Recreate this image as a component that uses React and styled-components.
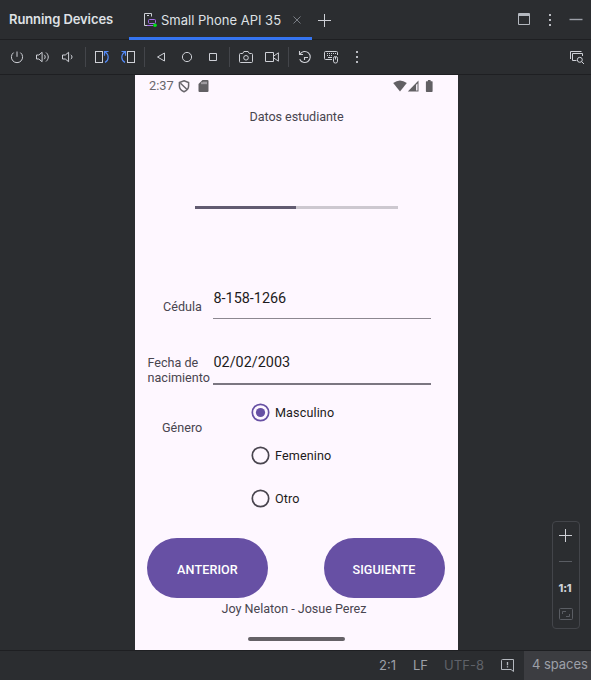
import React from "react";
import styled, { createGlobalStyle } from "styled-components";

const Global = createGlobalStyle`
  * { box-sizing: border-box; }
  body { margin: 0; background: #2b2d30; overflow: hidden; }
  svg { display: block; flex: none; }
`;

const Window = styled.div`
  width: 591px;
  height: 680px;
  display: flex;
  flex-direction: column;
  background: #2b2d30;
  color: #dfe1e5;
  font-family: Inter, sans-serif;
  font-size: 13px;
`;

const TabBar = styled.header`
  height: 40px;
  display: flex;
  align-items: stretch;
  border-bottom: 1px solid #1e1f22;
  flex: none;
`;

const ToolTitle = styled.div`
  width: 129px;
  padding-left: 9px;
  line-height: 39px;
  font-weight: 600;
  font-size: 13px;
  letter-spacing: -0.09px;
  white-space: nowrap;
`;

const Tab = styled.div`
  width: 183px;
  height: 40px;
  padding: 0 7px 0 14px;
  display: flex;
  align-items: center;
  background: linear-gradient(#3574f0, #3574f0) left bottom / 100% 3px no-repeat;
`;

const TabLabel = styled.span`
  width: 130px;
  margin-left: 4px;
  white-space: nowrap;
  letter-spacing: 0;
`;

const TabActions = styled.div`
  display: flex;
  align-items: center;
  padding-left: 4px;
  flex: 1;
`;

const WindowActions = styled.div`
  display: flex;
  margin-left: auto;
  padding-right: 2px;
`;

const Toolbar = styled.div`
  height: 35px;
  padding: 0 1px 0 4px;
  display: flex;
  align-items: center;
  border-bottom: 1px solid #1e1f22;
  flex: none;
`;

const Slot = styled.div`
  width: 26px;
  display: flex;
  justify-content: center;
  margin-left: ${(p) => (p.$end ? "auto" : 0)};
`;

const Separator = styled.div`
  width: 1px;
  height: 20px;
  margin: 0 3px;
  background: #43454a;
`;

const Stage = styled.main`
  height: 575px;
  padding-left: 135px;
  display: flex;
  flex: none;
`;

const Phone = styled.section`
  width: 323px;
  height: 575px;
  display: flex;
  flex-direction: column;
  background: #fef7ff;
  color: #49454f;
  font-family: Roboto, sans-serif;
  font-size: 13px;
`;

const PhoneStatus = styled.div`
  height: 22px;
  padding: 0 24px 0 14px;
  display: flex;
  align-items: center;
  color: #69666c;
`;

const Clock = styled.span`
  width: 28px;
  margin-top: -1px;
  font-size: 12.8px;
`;

const SignalGroup = styled.div`
  display: flex;
  align-items: center;
  margin-left: auto;
`;

const Heading = styled.div`
  margin-top: 12px;
  height: 16px;
  line-height: 16px;
  text-align: center;
  font-size: 12.6px;
  letter-spacing: -0.05px;
`;

const Progress = styled.div`
  width: 202.5px;
  height: 3px;
  margin: 81px 0 0 60px;
  background: #cdc8d0;
`;

const ProgressFill = styled.div`
  width: 101px;
  height: 3px;
  background: #625b71;
`;

const FieldRow = styled.div`
  height: 39px;
  margin-top: ${(p) => p.$top}px;
  display: grid;
  grid-template-columns: 78px 218px;
`;

const FieldLabel = styled.label`
  padding-left: ${(p) => p.$left}px;
  padding-top: ${(p) => p.$top || 0}px;
  font-size: 12.6px;
  line-height: 15px;
  letter-spacing: 0;
  white-space: pre;
`;

const FieldValue = styled.div`
  height: ${(p) => (p.$strong ? 35 : 34)}px;
  padding: ${(p) => (p.$strong ? 1 : 2)}px 0 0 0.5px;
  border-bottom: ${(p) => (p.$strong ? "2px solid #7b7681" : "1px solid #8c8790")};
  color: #1d1b20;
  font-size: 14.4px;
  line-height: 24px;
  letter-spacing: 0;
`;

const GenderRow = styled.div`
  margin-top: 2px;
  height: 130px;
  display: grid;
  grid-template-columns: 116px 1fr;
`;

const Option = styled.div`
  height: 43.2px;
  display: flex;
  align-items: center;
  gap: 5px;
  color: #1d1b20;
  font-size: 12.6px;
  letter-spacing: 0.12px;
`;

const ButtonRow = styled.div`
  margin-top: 17px;
  padding: 0 13.5px 0 12px;
  display: flex;
  justify-content: space-between;
`;

const PillButton = styled.button`
  width: 121px;
  height: 60px;
  padding: 2px 0 0;
  border: 0;
  border-radius: 30px;
  background: #6750a4;
  color: #fff;
  font: 500 12.6px Roboto, sans-serif;
  letter-spacing: 0.1px;
`;

const Credits = styled.div`
  margin-top: 3px;
  padding-right: 5px;
  height: 16px;
  line-height: 16px;
  text-align: center;
  font-size: 12.6px;
  letter-spacing: -0.03px;
`;

const HomeHandle = styled.div`
  width: 97px;
  height: 4px;
  margin: 20px 0 0 113px;
  border-radius: 2px;
  background: #656167;
`;

const ZoomPanel = styled.aside`
  width: 28px;
  height: 108px;
  margin: 446px 11px 0 auto;
  display: flex;
  flex-direction: column;
  align-items: center;
  border: 1px solid #43454a;
  border-radius: 4px;
`;

const ZoomCell = styled.div`
  height: 26.2px;
  padding-top: ${(p) => p.$drop || 0}px;
  padding-right: 2px;
  display: flex;
  align-items: center;
  justify-content: center;
  font-size: 11px;
  font-weight: 800;
  letter-spacing: -0.2px;
  color: #ced0d6;
`;

const Footer = styled.footer`
  height: 30px;
  display: flex;
  align-items: center;
  border-top: 1px solid #1e1f22;
  color: #9da0a8;
  flex: none;
`;

const FooterItem = styled.span`
  width: ${(p) => p.$w}px;
  margin-top: -2px;
  color: ${(p) => (p.$dim ? "#5f6269" : "inherit")};
  letter-spacing: ${(p) => p.$ls || 0}px;
  white-space: nowrap;
  &:first-child { margin-left: 379px; }
`;

const Indent = styled.div`
  width: 67px;
  height: 29px;
  padding-left: 8px;
  line-height: 27px;
  background: #3c3d41;
  white-space: nowrap;
  letter-spacing: -0.05px;
`;

const Icon = ({ w = 16, h = 16, color = "#ced0d6", children, ...rest }) => (
  <svg width={w} height={h} viewBox={`0 0 ${w} ${h}`} fill="none" stroke={color} {...rest}>
    {children}
  </svg>
);

const DeviceTabIcon = () => (
  <Icon w={14}>
    <path d="M4.5 13.5h-3v-12h7v3M4 3.5h2" />
    <rect x="5.5" y="7.5" width="7" height="4" rx="1" stroke="#a571e6" />
    <path d="M4 13.5h6" stroke="#a571e6" />
    <circle cx="12" cy="13.2" r="1.8" fill="#00e31a" stroke="none" />
  </Icon>
);

const Speaker = ({ loud }) => (
  <Icon>
    {loud ? (
      <path d="M1.5 6h2.3l3.3-2.7v9.4L3.8 10H1.5zM9.2 5.8c1.3 1.2 1.3 3.2 0 4.4M11 3.5c3 2.5 3 6.5 0 9" />
    ) : (
      <path d="M1.5 6h2.8l3.3-2.7v9.4L4.3 10H1.5zM9.8 5.8c1.6 1.2 1.6 3.2 0 4.4" />
    )}
  </Icon>
);

const Rotate = ({ right }) => (
  <Icon>
    <g transform={right ? "translate(16 0) scale(-1 1)" : undefined}>
      <rect x="1.5" y="2.5" width="7" height="11" />
      <path d="M11 13.4c4-1.8 4.4-7.6.2-10.4M10.5 6.8V2.5h4" stroke="#548af7" strokeWidth="1.2" />
    </g>
  </Icon>
);

const Dots = () => (
  <Icon stroke="none">
    <path d="M7 2h2v2H7zM7 7h2v2H7zM7 12h2v2H7z" fill="#b9bbc1" />
  </Icon>
);

const Radio = ({ on }) => (
  <Icon w={19} h={19} color={on ? "#6750a4" : "#49454f"}>
    <circle cx="9.5" cy="9.5" r="8.2" strokeWidth="1.7" />
    {on && <circle cx="9.5" cy="9.5" r="4.6" fill="#6750a4" stroke="none" />}
  </Icon>
);

export default function App() {
  return (
    <Window>
      <Global />
      <TabBar>
        <ToolTitle>Running Devices</ToolTitle>
        <Tab>
          <DeviceTabIcon />
          <TabLabel>Small Phone API 35</TabLabel>
          <Icon color="#7a7e85"><path d="M4.5 4.5l7 7M11.5 4.5l-7 7" /></Icon>
        </Tab>
        <TabActions>
          <Icon><path d="M8.5 2v13M2 8.5h13" /></Icon>
          <WindowActions>
            <Slot><Icon color="#b4b8bf"><path d="M2.5 1.5h11v11h-11zM2 2.5h12M2 3.5h12" /></Icon></Slot>
            <Slot><Dots /></Slot>
            <Slot><Icon><path d="M1.5 7.5h13" strokeWidth="1.4" stroke="#9da0a8" /></Icon></Slot>
          </WindowActions>
        </TabActions>
      </TabBar>

      <Toolbar>
        <Slot><Icon><path d="M8 2.5v5.3M4.6 3.6a5.6 5.6 0 1 0 6.8 0" /></Icon></Slot>
        <Slot><Speaker loud /></Slot>
        <Slot><Speaker /></Slot>
        <Separator />
        <Slot><Rotate /></Slot>
        <Slot><Rotate right /></Slot>
        <Separator />
        <Slot><Icon><path d="M11.5 4v8L4.5 8z" /></Icon></Slot>
        <Slot><Icon><circle cx="8" cy="8" r="4.6" /></Icon></Slot>
        <Slot><Icon><path d="M4.5 4.5h7v7h-7z" /></Icon></Slot>
        <Separator />
        <Slot>
          <Icon>
            <path d="M2.5 4.5h2.2l1.2-2h4.2l1.2 2h2.2q1 0 1 1v7q0 1-1 1h-11q-1 0-1-1v-7q0-1 1-1z" />
            <circle cx="8" cy="8.8" r="2.3" />
          </Icon>
        </Slot>
        <Slot><Icon><path d="M1.5 3.5h8v9h-8zM9.5 7.2l4.9-3.4v8.4L9.5 8.8" /></Icon></Slot>
        <Separator />
        <Slot><Icon><path d="M3 5.2a5.5 5.5 0 1 1-.3 5M2.5 2v3.5H6M7.5 11V8.5H11" strokeWidth="1.1" /></Icon></Slot>
        <Slot>
          <Icon>
            <path d="M9 10.5H2.5q-1 0-1-1v-6q0-1 1-1h11q1 0 1 1V6" />
            <path d="M4 4.5h1m1 0h1m1 0h1m1 0h1m1 0h1M4 6.5h1m1 0h1m1 0h1M5 8.5h4" />
            <rect x="10.5" y="7.5" width="4" height="6.5" rx="1.8" />
            <path d="M12.5 8v2.5" />
          </Icon>
        </Slot>
        <Slot><Dots /></Slot>
        <Slot $end>
          <Icon>
            <path d="M1.5 10V2.5h11M7.5 11.5h-4v-7h10V7" />
            <circle cx="10.8" cy="10.8" r="2.5" />
            <path d="M12.5 12.5l2.5 2.5" />
          </Icon>
        </Slot>
      </Toolbar>

      <Stage>
        <Phone>
          <PhoneStatus>
            <Clock>2:37</Clock>
            <Icon w={14} h={13} color="#69666c" strokeWidth="1.5">
              <path d="M7 .8l4.6 1.8v3.4c0 2.5-1.8 4.6-4.6 5.7-2.8-1.1-4.6-3.2-4.6-5.7V2.6zM3.5 3.3l6.3 6" />
            </Icon>
            <Icon w={25} h={13} stroke="none">
              <path d="M11.5 0h5q1 0 1 1v9.9q0 1-1 1H8.5q-1 0-1-1V4z" fill="#626064" />
              <path d="M11 2.2v2M13 1.7v2.5M15 1.7v2.5" stroke="#fef7ff" strokeWidth=".8" />
            </Icon>
            <SignalGroup>
              <Icon w={14} h={12} stroke="none"><path d="M7 11.4L.2 3Q7-2 13.8 3z" fill="#626064" /></Icon>
              <Icon w={18} h={12} stroke="none">
                <path d="M.8 11.5L11.5 .6v10.9z" fill="#626064" />
                <path d="M9.1 4.8l1.4-1.3v7H9.1z" fill="#fef7ff" />
              </Icon>
              <Icon w={9} h={12} stroke="none"><path d="M2.9 0h2.7v1.2h1.4q.6 0 .6.6v9.4q0 .8-.7.8H1.6q-.7 0-.7-.8V1.8q0-.6.6-.6h1.4z" fill="#626064" /></Icon>
            </SignalGroup>
          </PhoneStatus>
          <Heading>Datos estudiante</Heading>
          <Progress><ProgressFill /></Progress>
          <FieldRow $top={76}>
            <FieldLabel $left={28} $top={14}>Cédula</FieldLabel>
            <FieldValue>8-158-1266</FieldValue>
          </FieldRow>
          <FieldRow $top={26}>
            <FieldLabel $left={12.5} $top={5}>{"Fecha de\nnacimiento"}</FieldLabel>
            <FieldValue $strong>02/02/2003</FieldValue>
          </FieldRow>
          <GenderRow>
            <FieldLabel as="div" $left={27} $top={29}>Género</FieldLabel>
            <div>
              <Option><Radio on />Masculino</Option>
              <Option><Radio />Femenino</Option>
              <Option><Radio />Otro</Option>
            </div>
          </GenderRow>
          <ButtonRow>
            <PillButton>ANTERIOR</PillButton>
            <PillButton>SIGUIENTE</PillButton>
          </ButtonRow>
          <Credits>Joy Nelaton - Josue Perez</Credits>
          <HomeHandle />
        </Phone>
        <ZoomPanel>
          <ZoomCell><Icon><path d="M8.5 2v13M2 8.5h13" /></Icon></ZoomCell>
          <ZoomCell><Icon color="#5a5d63"><path d="M2 8.5h13" /></Icon></ZoomCell>
          <ZoomCell $drop={2}>1:1</ZoomCell>
          <ZoomCell>
            <Icon color="#5a5d63">
              <rect x="2.5" y="2.5" width="13" height="11" rx="1" />
              <path d="M5.5 8V5.5H9M12.5 8v2.5H9" />
            </Icon>
          </ZoomCell>
        </ZoomPanel>
      </Stage>

      <Footer>
        <FooterItem $w={34}>2:1</FooterItem>
        <FooterItem $w={31}>LF</FooterItem>
        <FooterItem $w={56} $dim $ls={0.1}>UTF-8</FooterItem>
        <Icon w={24} color="#b4b8bf">
          <path d="M2.5 1.5h11v12l-2.5-2H1.5v-9q0-1 1-1z" />
          <path d="M7.5 4v3.2M7.5 8.3v1.3" strokeWidth="1.3" />
        </Icon>
        <Indent>4 spaces</Indent>
      </Footer>
    </Window>
  );
}
